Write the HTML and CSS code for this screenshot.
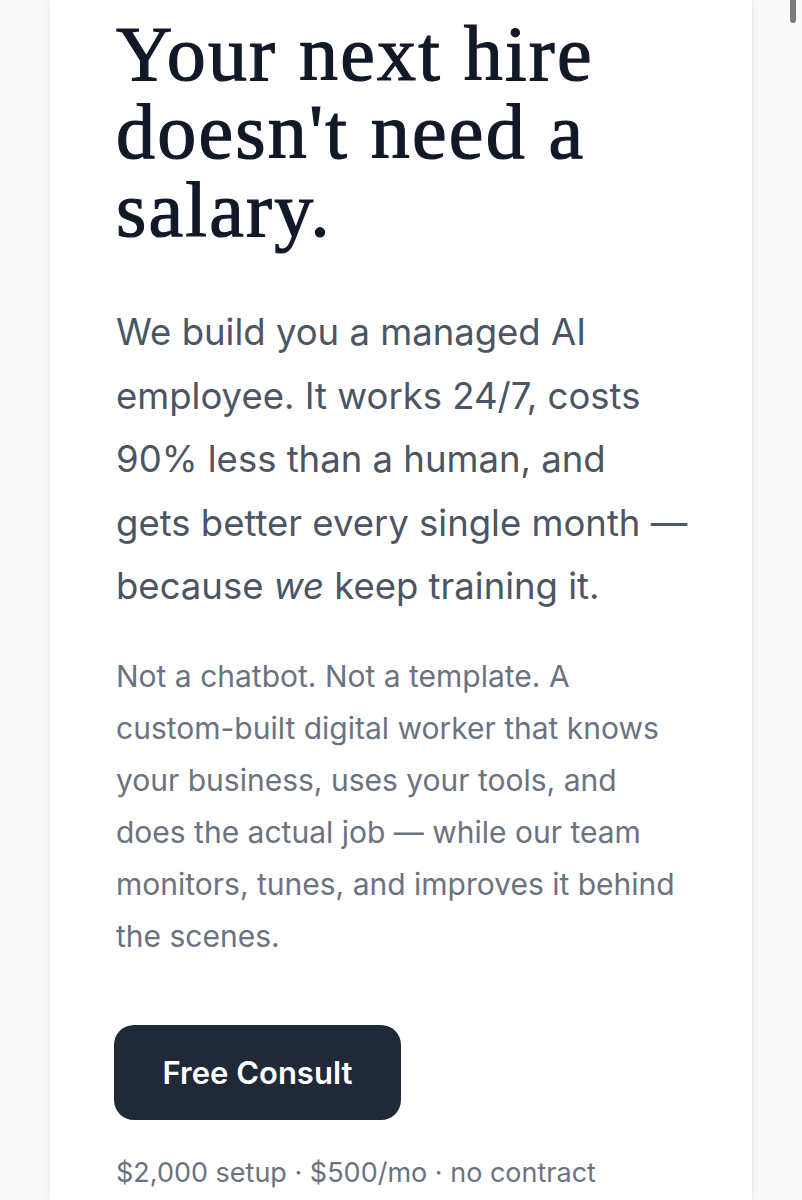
FILE: index.html
```html
<!DOCTYPE html>
<html lang="en">
<head>
<meta charset="utf-8">
<title>Your next hire</title>
<link rel="stylesheet" href="styles.css">
</head>
<body>
<main class="card">
  <h1 class="title">Your next hire doesn't need a salary.</h1>
  <p class="lead">We build you a managed AI<br>employee. It works 24/7, costs<br>90% less than a human, and<br>gets better every single month —<br>because <em>we</em> keep training it.</p>
  <p class="body">Not a chatbot. Not a template. A<br>custom-built digital worker that knows<br>your business, uses your tools, and<br>does the actual job — while our team<br>monitors, tunes, and improves it behind<br>the scenes.</p>
  <a class="cta" href="#">Free Consult</a>
  <p class="price">$2,000 setup · $500/mo · no contract</p>
</main>
<div class="scroll-thumb"></div>
</body>
</html>
```
FILE: styles.css
```css
html, body {
  margin: 0;
  padding: 0;
  background: #fafafa;
}
body {
  height: 1200px;
  overflow: hidden;
}
.card {
  box-sizing: border-box;
  width: 702px;
  margin-left: 50px;
  min-height: 1200px;
  background: #ffffff;
  box-shadow: 0 0 14px rgba(0, 0, 0, 0.07), 1px 0 2px rgba(0, 0, 0, 0.05);
  padding: 15px 20px 0 66px;
}
.title {
  max-width: 600px;
  margin: 0;
  font-family: "Liberation Serif", "DejaVu Serif", serif;
  font-weight: 400;
  font-size: 78px;
  line-height: 78px;
  letter-spacing: 2.2px;
  color: #111827;
  -webkit-text-stroke: 1.2px #111827;
}
.lead {
  margin: 52px 0 0;
  font-family: Inter, "Liberation Sans", sans-serif;
  font-size: 36.5px;
  line-height: 63.5px;
  color: #4b5563;
}
.lead em {
  font-style: italic;
}
.body {
  margin: 31px 0 0;
  font-family: Inter, "Liberation Sans", sans-serif;
  font-size: 30px;
  line-height: 52px;
  color: #6b7280;
}
.cta {
  display: flex;
  align-items: center;
  justify-content: center;
  width: 287px;
  height: 95px;
  margin: 63px 0 0 -2px;
  border-radius: 20px;
  background: #1f2937;
  color: #ffffff;
  font-family: Inter, "Liberation Sans", sans-serif;
  font-weight: 600;
  font-size: 31px;
  text-decoration: none;
}
.price {
  margin: 35px 0 0;
  font-family: Inter, "Liberation Sans", sans-serif;
  font-size: 27px;
  line-height: 36px;
  color: #6b7280;
}
.scroll-thumb {
  position: absolute;
  top: -6px;
  left: 790px;
  width: 6px;
  height: 29px;
  border-radius: 3px;
  background: #7d7d7d;
}
```
